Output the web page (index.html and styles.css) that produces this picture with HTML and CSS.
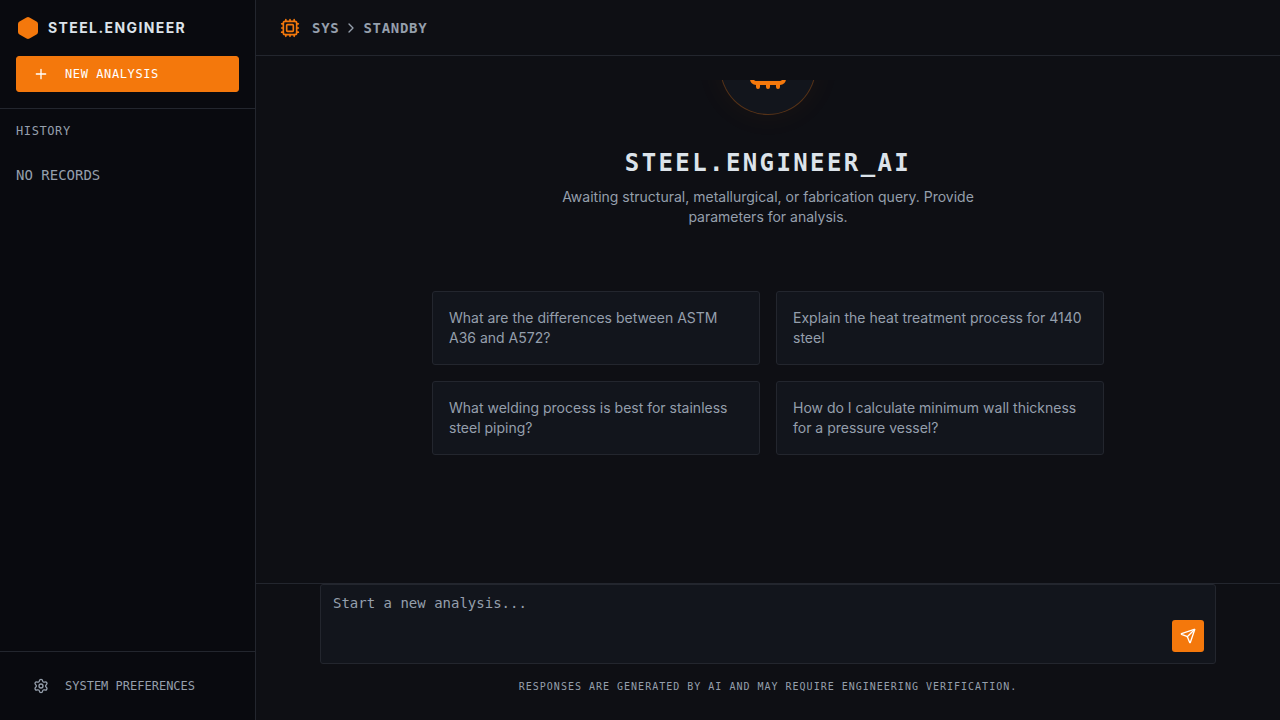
FILE: index.html
```html
<!DOCTYPE html>
<html lang="en">
<head>
<meta charset="utf-8">
<meta name="viewport" content="width=device-width, initial-scale=1">
<title>Steel.Engineer</title>
<link rel="stylesheet" href="styles.css">
</head>
<body>
<svg class="sprite" aria-hidden="true">
  <symbol id="cpu" viewBox="0 0 24 24">
    <path d="M12 20v2M12 2v2M17 20v2M17 2v2M2 12h2M2 17h2M2 7h2M20 12h2M20 17h2M20 7h2M7 20v2M7 2v2"/>
    <rect x="4" y="4" width="16" height="16" rx="2"/>
    <rect x="8" y="8" width="8" height="8" rx="1"/>
  </symbol>
</svg>
<div class="app">
  <aside class="sidebar">
    <div class="sidebar-top">
      <div class="brand">
        <svg class="icon icon-lg brand-mark" viewBox="0 0 24 24" aria-hidden="true"><path d="M21 16V8a2 2 0 0 0-1-1.73l-7-4a2 2 0 0 0-2 0l-7 4A2 2 0 0 0 3 8v8a2 2 0 0 0 1 1.73l7 4a2 2 0 0 0 2 0l7-4A2 2 0 0 0 21 16z"/></svg>
        <span>STEEL.ENGINEER</span>
      </div>
      <button class="side-button new-analysis" type="button">
        <svg class="icon icon-sm" viewBox="0 0 24 24" aria-hidden="true"><path d="M5 12h14M12 5v14"/></svg>
        NEW ANALYSIS
      </button>
    </div>
    <nav class="history" aria-labelledby="history-title">
      <h2 class="history-title" id="history-title">HISTORY</h2>
      <p class="history-empty">NO RECORDS</p>
    </nav>
    <div class="sidebar-bottom">
      <button class="side-button preferences" type="button">
        <svg class="icon icon-sm" viewBox="0 0 24 24" aria-hidden="true"><path d="M9.671 4.136a2.34 2.34 0 0 1 4.659 0 2.34 2.34 0 0 0 3.319 1.915 2.34 2.34 0 0 1 2.33 4.033 2.34 2.34 0 0 0 0 3.831 2.34 2.34 0 0 1-2.33 4.033 2.34 2.34 0 0 0-3.319 1.915 2.34 2.34 0 0 1-4.659 0 2.34 2.34 0 0 0-3.32-1.915 2.34 2.34 0 0 1-2.33-4.033 2.34 2.34 0 0 0 0-3.831A2.34 2.34 0 0 1 6.35 6.051a2.34 2.34 0 0 0 3.319-1.915"/><circle cx="12" cy="12" r="3"/></svg>
        SYSTEM PREFERENCES
      </button>
    </div>
  </aside>
  <main class="main">
    <header class="topbar">
      <svg class="icon icon-md accent" aria-hidden="true"><use href="#cpu"/></svg>
      <div class="crumbs">
        <span>SYS</span>
        <svg class="icon icon-sm" viewBox="0 0 24 24" aria-hidden="true"><path d="m9 18 6-6-6-6"/></svg>
        <span>STANDBY</span>
      </div>
    </header>
    <div class="stage">
      <section class="welcome">
        <div class="emblem"><svg class="icon icon-xl accent" aria-hidden="true"><use href="#cpu"/></svg></div>
        <h1 class="title">STEEL.ENGINEER_AI</h1>
        <p class="lead">Awaiting structural, metallurgical, or fabrication query. Provide parameters for analysis.</p>
        <div class="prompts">
          <button class="prompt" type="button">What are the differences between ASTM A36 and A572?</button>
          <button class="prompt" type="button">Explain the heat treatment process for 4140 steel</button>
          <button class="prompt" type="button">What welding process is best for stainless steel piping?</button>
          <button class="prompt" type="button">How do I calculate minimum wall thickness for a pressure vessel?</button>
        </div>
      </section>
    </div>
    <footer class="composer">
      <form class="composer-box">
        <textarea class="composer-input" aria-label="Message" placeholder="Start a new analysis..."></textarea>
        <button class="send" type="button" aria-label="Send">
          <svg class="icon icon-sm" viewBox="0 0 24 24" aria-hidden="true"><path d="M14.536 21.686a.5.5 0 0 0 .937-.024l6.5-19a.496.496 0 0 0-.635-.635l-19 6.5a.5.5 0 0 0-.024.937l7.93 3.18a2 2 0 0 1 1.112 1.11z"/><path d="m21.854 2.147-10.94 10.939"/></svg>
        </button>
      </form>
      <p class="disclaimer">RESPONSES ARE GENERATED BY AI AND MAY REQUIRE ENGINEERING VERIFICATION.</p>
    </footer>
  </main>
</div>
</body>
</html>
```

FILE: styles.css
```css
:root {
  --bg: #0e0f14;
  --sidebar: #090a0f;
  --card: #12151c;
  --line: #23262e;
  --muted: #959fac;
  --text: #dce3ea;
  --accent: #f4780c;
  --sans: Inter, "Liberation Sans", sans-serif;
  --mono: "DejaVu Sans Mono", "Liberation Mono", monospace;
}

* { box-sizing: border-box; }

body {
  margin: 0;
  background: var(--bg);
  color: var(--muted);
  font: 14px/20px var(--sans);
}

h1, h2, p { margin: 0; }
button { font: inherit; color: inherit; cursor: pointer; }

.sprite { display: none; }

.icon {
  flex: none;
  fill: none;
  stroke: currentColor;
  stroke-width: 2;
  stroke-linecap: round;
  stroke-linejoin: round;
}
.icon-sm { width: 16px; height: 16px; }
.icon-md { width: 20px; height: 20px; }
.icon-lg { width: 24px; height: 24px; }
.icon-xl { width: 48px; height: 48px; }
.accent { color: var(--accent); }

.app { display: flex; height: 100vh; }

.sidebar {
  flex: none;
  display: flex;
  flex-direction: column;
  width: 256px;
  background: var(--sidebar);
  border-right: 1px solid var(--line);
}
.sidebar-top {
  display: grid;
  gap: 16px;
  padding: 16px;
  border-bottom: 1px solid var(--line);
}
.brand {
  display: flex;
  align-items: center;
  gap: 8px;
  color: var(--text);
  font-weight: 700;
  letter-spacing: 0.1em;
}
.brand-mark { color: var(--accent); fill: currentColor; }

.side-button {
  display: flex;
  align-items: center;
  gap: 16px;
  width: 100%;
  height: 36px;
  padding: 0 16px;
  border: 1px solid transparent;
  border-radius: 3px;
  background: transparent;
  font: 12px/16px var(--mono);
}
.new-analysis {
  border-color: var(--accent);
  background: var(--accent);
  color: #fff;
  letter-spacing: 0.05em;
}

.history {
  flex: 1;
  display: grid;
  align-content: start;
  gap: 26px;
  padding: 14px 16px;
  font-family: var(--mono);
}
.history-title {
  font-size: 12px;
  line-height: 16px;
  font-weight: 400;
  letter-spacing: 0.05em;
}
.sidebar-bottom { padding: 16px; border-top: 1px solid var(--line); }

.main {
  flex: 1;
  display: flex;
  flex-direction: column;
  min-width: 0;
}
.topbar {
  flex: none;
  display: flex;
  align-items: center;
  gap: 12px;
  height: 56px;
  padding: 0 24px;
  border-bottom: 1px solid var(--line);
}
.crumbs {
  display: flex;
  align-items: center;
  gap: 4px;
  font-family: var(--mono);
  font-weight: 700;
  letter-spacing: 0.05em;
}

.stage {
  flex: 1;
  display: flex;
  min-height: 0;
  padding: 24px;
}
.welcome {
  flex: 1;
  display: flex;
  flex-direction: column;
  align-items: center;
  justify-content: flex-end;
  padding-bottom: 104px;
  overflow: hidden;
  text-align: center;
}
.emblem {
  flex: none;
  display: grid;
  place-items: center;
  width: 96px;
  height: 96px;
  margin-bottom: 32px;
  border: 1px solid rgba(244, 120, 12, 0.3);
  border-radius: 50%;
  background: var(--card);
  box-shadow: 0 0 30px rgba(244, 120, 12, 0.06);
}
.title {
  color: var(--text);
  font: 700 24px/32px var(--mono);
  letter-spacing: 0.1em;
}
.lead { max-width: 448px; margin: 8px 0 64px; }
.prompts {
  display: grid;
  grid-template-columns: 1fr 1fr;
  gap: 16px;
  width: 100%;
  max-width: 672px;
}
.prompt {
  padding: 16px;
  border: 1px solid var(--line);
  border-radius: 3px;
  background: var(--card);
  text-align: left;
}

.composer {
  flex: none;
  padding: 0 24px 26px;
  border-top: 1px solid var(--line);
}
.composer-box {
  position: relative;
  max-width: 896px;
  margin: 0 auto;
}
.composer-input {
  display: block;
  width: 100%;
  height: 80px;
  padding: 8px 48px 8px 12px;
  border: 1px solid var(--line);
  border-radius: 3px;
  background: var(--card);
  color: var(--text);
  font: 14px/20px var(--mono);
  resize: none;
}
.composer-input::placeholder { color: var(--muted); opacity: 1; }
.send {
  position: absolute;
  right: 12px;
  bottom: 12px;
  display: grid;
  place-items: center;
  width: 32px;
  height: 32px;
  padding: 0;
  border: 0;
  border-radius: 3px;
  background: var(--accent);
  color: #fff;
}
.disclaimer {
  margin-top: 16px;
  font: 10px/14px var(--mono);
  letter-spacing: 0.1em;
  text-align: center;
}
```
